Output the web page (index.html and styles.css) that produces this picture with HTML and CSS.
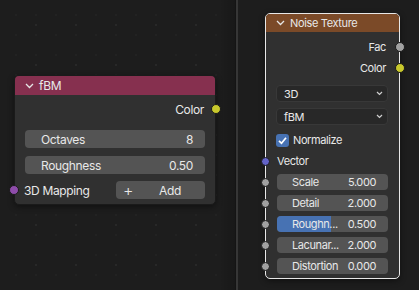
FILE: index.html
```html
<!DOCTYPE html>
<html>
<head>
<meta charset="utf-8">
<link rel="stylesheet" href="styles.css">
</head>
<body>
<div class="screen">
  <div class="pane pane-left">
    <div class="node node-fbm">
      <div class="node-header hdr-fbm">
        <svg class="chev" width="9" height="6" viewBox="0 0 9 6"><polyline points="1,1 4.5,4.5 8,1" fill="none" stroke="#e6e6e6" stroke-width="1.3"/></svg>
        <span>fBM</span>
      </div>
      <div class="node-body body-fbm">
        <div class="out-row"><span>Color</span><i class="sock sock-out s-yellow"></i></div>
        <div class="field f-l"><span>Octaves</span><span>8</span></div>
        <div class="field f-l"><span>Roughness</span><span>0.50</span></div>
        <div class="map-row">
          <i class="sock sock-in s-purple"></i>
          <span class="map-label">3D Mapping</span>
          <div class="add-btn"><span class="plus">+</span><span class="add-t">Add</span></div>
        </div>
      </div>
    </div>
  </div>
  <div class="sep"></div>
  <div class="pane pane-right">
    <div class="node node-noise">
      <div class="node-header hdr-noise">
        <svg class="chev" width="9" height="6" viewBox="0 0 9 6"><polyline points="1,1 4.5,4.5 8,1" fill="none" stroke="#e6e6e6" stroke-width="1.3"/></svg>
        <span>Noise Texture</span>
      </div>
      <div class="node-body body-noise">
        <div class="out-row r-out"><span>Fac</span><i class="sock sock-out s-grey"></i></div>
        <div class="out-row r-out"><span>Color</span><i class="sock sock-out s-yellow"></i></div>
        <div class="dropdown"><span>3D</span><svg width="7" height="5" viewBox="0 0 7 5"><polyline points="1,1 3.5,3.5 6,1" fill="none" stroke="#d0d0d0" stroke-width="1.2"/></svg></div>
        <div class="dropdown"><span>fBM</span><svg width="7" height="5" viewBox="0 0 7 5"><polyline points="1,1 3.5,3.5 6,1" fill="none" stroke="#d0d0d0" stroke-width="1.2"/></svg></div>
        <div class="check-row"><span class="cbox"><svg width="13" height="13" viewBox="0 0 13 13"><polyline points="3,6.8 5.5,9.3 10,3.8" fill="none" stroke="#fff" stroke-width="1.7"/></svg></span><span>Normalize</span></div>
        <div class="in-row"><i class="sock sock-in s-blue"></i><span>Vector</span></div>
        <div class="fields">
          <div class="field f-r"><i class="sock sock-in s-grey"></i><span>Scale</span><span>5.000</span></div>
          <div class="field f-r"><i class="sock sock-in s-grey"></i><span>Detail</span><span>2.000</span></div>
          <div class="field f-r"><i class="sock sock-in s-grey"></i><b class="fill" style="width:49%"></b><span>Roughn...</span><span>0.500</span></div>
          <div class="field f-r"><i class="sock sock-in s-grey"></i><span>Lacunar...</span><span>2.000</span></div>
          <div class="field f-r"><i class="sock sock-in s-grey"></i><span>Distortion</span><span>0.000</span></div>
        </div>
      </div>
    </div>
  </div>
</div>
</body>
</html>
```

FILE: styles.css
```css
* { box-sizing: border-box; }
html, body { margin: 0; padding: 0; }
body {
  width: 419px; height: 290px; overflow: hidden;
  background: #1d1d1d;
  font-family: Inter, "DejaVu Sans", sans-serif;
  color: #e8e8e8;
}
.screen { display: flex; width: 419px; height: 290px; }
.pane {
  position: relative;
  height: 290px;
  background-color: #1d1d1d;
  background-image:
    radial-gradient(circle, #282828 0.9px, transparent 1.3px),
    radial-gradient(circle, #222222 0.8px, transparent 1.2px);
  background-size: 40px 40px, 20px 20px;
}
.pane-left {
  width: 235px;
  background-position: 16px 5px, 6px 5px;
}
.pane-left::after {
  content: ""; position: absolute; right: 0; top: 0; bottom: 0; width: 16px;
  background: linear-gradient(to right, rgba(0,0,0,0), rgba(0,0,0,0.18));
}
.sep { width: 3px; height: 290px; background: #363636; border-left: 1px solid #141414; }
.pane-right { flex: 1; background-image: none; }

.node {
  position: absolute;
  background: #303030;
  border-radius: 5px;
  box-shadow: 0 2px 6px rgba(0,0,0,0.45);
}
.node-fbm { left: 14px; top: 75px; width: 202px; height: 130px; border: 1px solid #1a1a1a; }
.node-noise { left: 27px; top: 13px; width: 135px; height: 266px; border: 1px solid #e8e8e8; }
.node-header {
  display: flex; align-items: center;
  border-radius: 4px 4px 0 0;
}
.hdr-fbm { height: 19px; background: #86304f; padding-left: 10px; font-size: 12px; letter-spacing: -0.3px; }
.hdr-noise { height: 18px; background: #7b4a28; padding-left: 10px; font-size: 11px; letter-spacing: -0.35px; }
.chev { margin-right: 5px; }

.node-body { display: flex; flex-direction: column; }
.body-fbm { padding: 5px 10px 0 9px; font-size: 12px; letter-spacing: -0.35px; }
.out-row {
  position: relative; display: flex; justify-content: flex-end; align-items: center;
  height: 18px; padding-right: 1px;
}
.body-fbm .out-row { margin-bottom: 12px; }
.sock {
  position: absolute; top: 50%; width: 10px; height: 10px; margin-top: -5px;
  border-radius: 50%; border: 1px solid #1a1a1a;
}
.sock-out { right: -16px; }
.s-yellow { background: #c8c82c; }
.s-purple { background: #8e4caa; }
.s-grey { background: #a1a1a1; }
.s-blue { background: #6363c8; }

.field {
  position: relative; display: flex; justify-content: space-between; align-items: center;
  background: #545454; border-radius: 4px;
}
.f-l { height: 18px; margin-left: 1px; padding: 0 12px 0 16px; margin-bottom: 8px; }
.f-l:nth-of-type(3) { margin-bottom: 7px; }
.map-row { position: relative; display: flex; align-items: center; height: 18px; }
.map-row .sock-in { left: -15px; }
.map-label { flex: 1; }
.add-btn {
  width: 89px; height: 18px; background: #545454; border-radius: 4px;
  display: flex; align-items: center; padding-left: 7px;
}
.plus { font-size: 16px; font-weight: 300; line-height: 1; width: 30px; }
.add-t { flex: 1; text-align: center; padding-right: 18px; }

.body-noise { padding: 4px 11px 0 10px; font-size: 11px; letter-spacing: -0.4px; }
.r-out { height: 21px; padding-right: 2px; }
.body-noise .sock-out { right: -17px; }
.body-noise .r-out:nth-child(2) { margin-bottom: 7px; }
.dropdown {
  display: flex; justify-content: space-between; align-items: center;
  height: 17px; margin-bottom: 6px; padding: 0 4px 0 7px;
  background: #282828; border: 1px solid #383838; border-radius: 4px;
}
.check-row { display: flex; align-items: center; height: 14px; margin-top: 2px; }
.cbox {
  width: 13px; height: 13px; background: #4772b3; border-radius: 3px; margin-right: 4px;
  display: flex;
}
.in-row { position: relative; display: flex; align-items: center; height: 16px; margin-top: 6px; padding-left: 1px; }
.in-row .sock-in { left: -15px; width: 9px; height: 9px; margin-top: -4.5px; }
.fields { display: flex; flex-direction: column; gap: 5px; margin-top: 5px; }
.f-r { height: 16px; margin-left: 1px; padding: 0 12px 0 15px; }
.f-r .sock-in { left: -16px; width: 9px; height: 9px; margin-top: -4.5px; }
.f-r span { position: relative; }
.fill {
  position: absolute; left: 0; top: 0; bottom: 0;
  background: #4772b3; border-radius: 4px 0 0 4px;
}
```
